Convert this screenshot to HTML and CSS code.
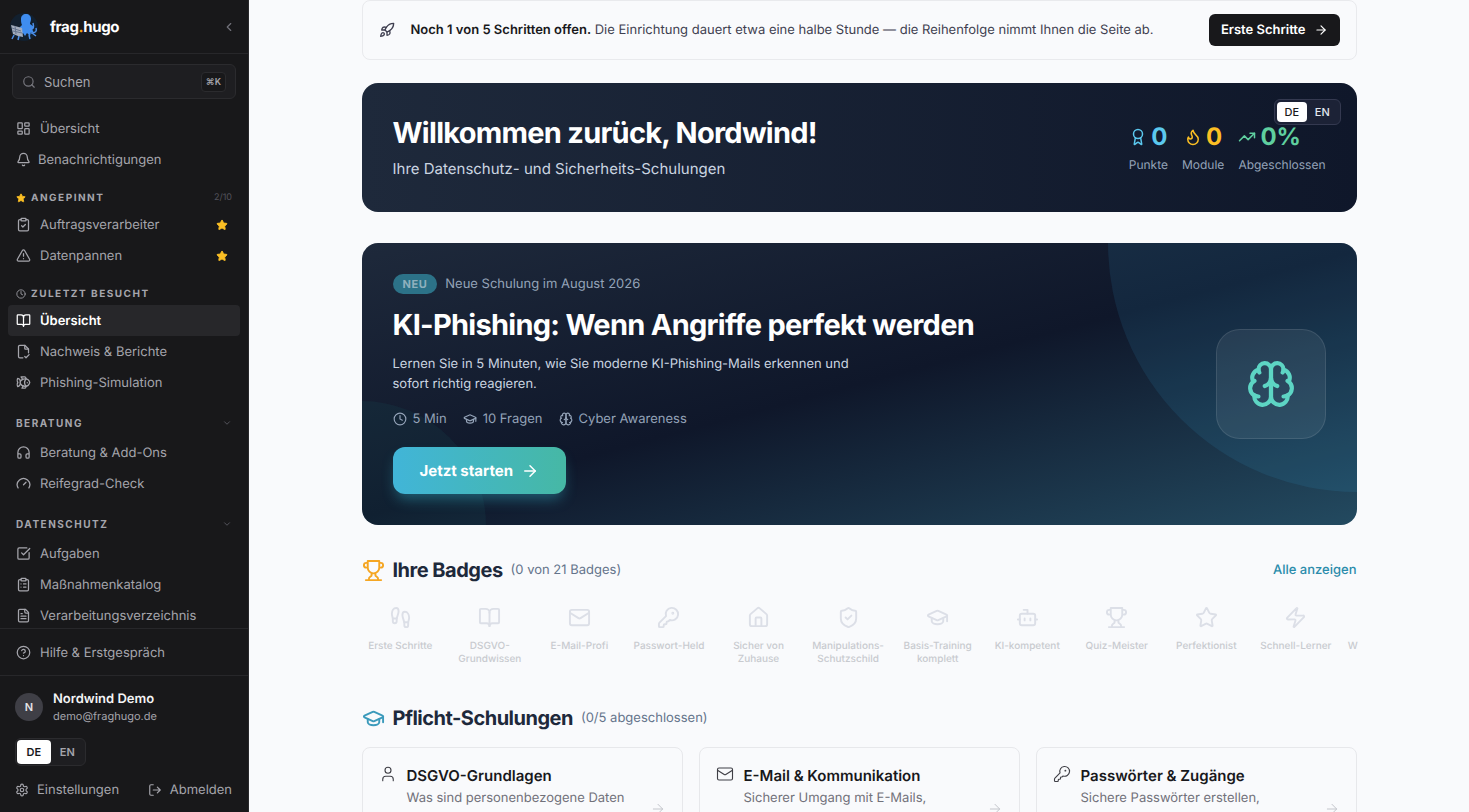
FILE: index.html
```html
<!DOCTYPE html>
<html lang="de">
<head>
    <meta charset="UTF-8">
    <meta name="viewport" content="width=device-width, initial-scale=1.0">
    <title>frag.hugo – Übersicht</title>
    <link rel="stylesheet" href="styles.css">
</head>
<body>
    <!-- Icon sprite -->
    <svg class="sprite" aria-hidden="true">
        <symbol id="chevron-left" viewBox="0 0 24 24"><path d="m15 18-6-6 6-6"/></symbol>
        <symbol id="chevron-down" viewBox="0 0 24 24"><path d="m6 9 6 6 6-6"/></symbol>
        <symbol id="arrow-right" viewBox="0 0 24 24"><path d="M5 12h14"/><path d="m12 5 7 7-7 7"/></symbol>
        <symbol id="search" viewBox="0 0 24 24"><circle cx="11" cy="11" r="8"/><path d="m21 21-4.3-4.3"/></symbol>
        <symbol id="dashboard" viewBox="0 0 24 24"><rect width="7" height="9" x="3" y="3" rx="1"/><rect width="7" height="5" x="14" y="3" rx="1"/><rect width="7" height="9" x="14" y="12" rx="1"/><rect width="7" height="5" x="3" y="16" rx="1"/></symbol>
        <symbol id="bell" viewBox="0 0 24 24"><path d="M10.268 21a2 2 0 0 0 3.464 0"/><path d="M3.262 15.326A1 1 0 0 0 4 17h16a1 1 0 0 0 .74-1.673C19.41 13.956 18 12.499 18 8A6 6 0 0 0 6 8c0 4.499-1.411 5.956-2.738 7.326"/></symbol>
        <symbol id="star" viewBox="0 0 24 24"><path d="M11.525 2.295a.53.53 0 0 1 .95 0l2.31 4.679a2.123 2.123 0 0 0 1.595 1.16l5.166.756a.53.53 0 0 1 .294.904l-3.736 3.638a2.123 2.123 0 0 0-.611 1.878l.882 5.14a.53.53 0 0 1-.771.56l-4.618-2.428a2.122 2.122 0 0 0-1.973 0L6.396 21.01a.53.53 0 0 1-.77-.56l.881-5.139a2.122 2.122 0 0 0-.611-1.879L2.16 9.795a.53.53 0 0 1 .294-.906l5.165-.755a2.122 2.122 0 0 0 1.597-1.16z"/></symbol>
        <symbol id="clipboard-check" viewBox="0 0 24 24"><rect width="8" height="4" x="8" y="2" rx="1"/><path d="M16 4h2a2 2 0 0 1 2 2v14a2 2 0 0 1-2 2H6a2 2 0 0 1-2-2V6a2 2 0 0 1 2-2h2"/><path d="m9 14 2 2 4-4"/></symbol>
        <symbol id="clipboard-list" viewBox="0 0 24 24"><rect width="8" height="4" x="8" y="2" rx="1"/><path d="M16 4h2a2 2 0 0 1 2 2v14a2 2 0 0 1-2 2H6a2 2 0 0 1-2-2V6a2 2 0 0 1 2-2h2"/><path d="M12 11h4M12 16h4M8 11h.01M8 16h.01"/></symbol>
        <symbol id="alert" viewBox="0 0 24 24"><path d="m21.73 18-8-14a2 2 0 0 0-3.48 0l-8 14A2 2 0 0 0 4 21h16a2 2 0 0 0 1.73-3"/><path d="M12 9v4M12 17h.01"/></symbol>
        <symbol id="clock" viewBox="0 0 24 24"><circle cx="12" cy="12" r="10"/><path d="M12 6v6l4 2"/></symbol>
        <symbol id="book-open" viewBox="0 0 24 24"><path d="M12 7v14"/><path d="M3 18a1 1 0 0 1-1-1V4a1 1 0 0 1 1-1h5a4 4 0 0 1 4 4 4 4 0 0 1 4-4h5a1 1 0 0 1 1 1v13a1 1 0 0 1-1 1h-6a3 3 0 0 0-3 3 3 3 0 0 0-3-3z"/></symbol>
        <symbol id="file-check" viewBox="0 0 24 24"><path d="M11 22H6a2 2 0 0 1-2-2V4a2 2 0 0 1 2-2h8l6 6v6"/><path d="M14 2v5a1 1 0 0 0 1 1h5"/><path d="m14 20 2 2 5-5"/></symbol>
        <symbol id="file-text" viewBox="0 0 24 24"><path d="M15 2H6a2 2 0 0 0-2 2v16a2 2 0 0 0 2 2h12a2 2 0 0 0 2-2V7Z"/><path d="M14 2v4a2 2 0 0 0 2 2h4M10 9H8M16 13H8M16 17H8"/></symbol>
        <symbol id="fish" viewBox="0 0 24 24"><path d="M6.5 12c.94-3.46 4.94-6 8.5-6 3.56 0 6.06 2.54 7 6-.94 3.47-3.44 6-7 6s-7.56-2.53-8.5-6Z"/><path d="M18 12v.5M16 17.93a9.77 9.77 0 0 1 0-11.86"/><path d="M7 10.67C7 8 5.58 5.97 2.73 5.5c-1 1.5-1 5 .23 6.5-1.24 1.5-1.24 5-.23 6.5C5.58 18.03 7 16 7 13.33"/><path d="M10.46 7.26C10.2 5.88 9.17 4.24 8 3h5.8a2 2 0 0 1 1.98 1.67l.23 1.4M16.01 17.93l-.23 1.4A2 2 0 0 1 13.8 21H9.5a5.96 5.96 0 0 0 1.49-3.98"/></symbol>
        <symbol id="headphones" viewBox="0 0 24 24"><path d="M3 14h3a2 2 0 0 1 2 2v3a2 2 0 0 1-2 2H5a2 2 0 0 1-2-2v-7a9 9 0 0 1 18 0v7a2 2 0 0 1-2 2h-1a2 2 0 0 1-2-2v-3a2 2 0 0 1 2-2h3"/></symbol>
        <symbol id="gauge" viewBox="0 0 24 24"><path d="m12 14 4-4"/><path d="M3.34 19a10 10 0 1 1 17.32 0"/></symbol>
        <symbol id="square-check" viewBox="0 0 24 24"><path d="M21 10.656V19a2 2 0 0 1-2 2H5a2 2 0 0 1-2-2V5a2 2 0 0 1 2-2h12.344"/><path d="m9 11 3 3L22 4"/></symbol>
        <symbol id="help" viewBox="0 0 24 24"><circle cx="12" cy="12" r="10"/><path d="M9.09 9a3 3 0 0 1 5.83 1c0 2-3 3-3 3M12 17h.01"/></symbol>
        <symbol id="settings" viewBox="0 0 24 24"><path d="M12.22 2h-.44a2 2 0 0 0-2 2v.18a2 2 0 0 1-1 1.73l-.43.25a2 2 0 0 1-2 0l-.15-.08a2 2 0 0 0-2.73.73l-.22.38a2 2 0 0 0 .73 2.73l.15.1a2 2 0 0 1 1 1.72v.51a2 2 0 0 1-1 1.74l-.15.09a2 2 0 0 0-.73 2.73l.22.38a2 2 0 0 0 2.73.73l.15-.08a2 2 0 0 1 2 0l.43.25a2 2 0 0 1 1 1.73V20a2 2 0 0 0 2 2h.44a2 2 0 0 0 2-2v-.18a2 2 0 0 1 1-1.73l.43-.25a2 2 0 0 1 2 0l.15.08a2 2 0 0 0 2.73-.73l.22-.39a2 2 0 0 0-.73-2.73l-.15-.08a2 2 0 0 1-1-1.74v-.5a2 2 0 0 1 1-1.74l.15-.09a2 2 0 0 0 .73-2.73l-.22-.38a2 2 0 0 0-2.73-.73l-.15.08a2 2 0 0 1-2 0l-.43-.25a2 2 0 0 1-1-1.73V4a2 2 0 0 0-2-2z"/><circle cx="12" cy="12" r="3"/></symbol>
        <symbol id="log-out" viewBox="0 0 24 24"><path d="m16 17 5-5-5-5M21 12H9M9 21H5a2 2 0 0 1-2-2V5a2 2 0 0 1 2-2h4"/></symbol>
        <symbol id="rocket" viewBox="0 0 24 24"><path d="M4.5 16.5c-1.5 1.26-2 5-2 5s3.74-.5 5-2c.71-.84.7-2.13-.09-2.91a2.18 2.18 0 0 0-2.91-.09z"/><path d="m12 15-3-3a22 22 0 0 1 2-3.95A12.88 12.88 0 0 1 22 2c0 2.72-.78 7.5-6 11a22.35 22.35 0 0 1-4 2z"/><path d="M9 12H4s.55-3.03 2-4c1.62-1.08 5 0 5 0M12 15v5s3.03-.55 4-2c1.08-1.62 0-5 0-5"/></symbol>
        <symbol id="award" viewBox="0 0 24 24"><path d="m15.477 12.89 1.515 8.526a.5.5 0 0 1-.81.47l-3.58-2.687a1 1 0 0 0-1.197 0l-3.586 2.686a.5.5 0 0 1-.81-.469l1.514-8.526"/><circle cx="12" cy="8" r="6"/></symbol>
        <symbol id="flame" viewBox="0 0 24 24"><path d="M8.5 14.5A2.5 2.5 0 0 0 11 12c0-1.38-.5-2-1-3-1.072-2.143-.224-4.054 2-6 .5 2.5 2 4.9 4 6.5 2 1.6 3 3.5 3 5.5a7 7 0 1 1-14 0c0-1.153.433-2.294 1-3a2.5 2.5 0 0 0 2.5 2.5z"/></symbol>
        <symbol id="trending-up" viewBox="0 0 24 24"><path d="m22 7-8.5 8.5-5-5L2 17"/><path d="M16 7h6v6"/></symbol>
        <symbol id="graduation-cap" viewBox="0 0 24 24"><path d="M21.42 10.922a1 1 0 0 0-.019-1.838L12.83 5.18a2 2 0 0 0-1.66 0L2.6 9.08a1 1 0 0 0 0 1.832l8.57 3.908a2 2 0 0 0 1.66 0z"/><path d="M22 10v6"/><path d="M6 12.5V16a6 3 0 0 0 12 0v-3.5"/></symbol>
        <symbol id="brain" viewBox="0 0 24 24"><path d="M12 5a3 3 0 1 0-5.997.125 4 4 0 0 0-2.526 5.77 4 4 0 0 0 .556 6.588A4 4 0 1 0 12 18Z"/><path d="M12 5a3 3 0 1 1 5.997.125 4 4 0 0 1 2.526 5.77 4 4 0 0 1-.556 6.588A4 4 0 1 1 12 18Z"/><path d="M15 13a4.5 4.5 0 0 1-3-4 4.5 4.5 0 0 1-3 4"/><path d="M17.599 6.5a3 3 0 0 0 .399-1.375M6.003 5.125A3 3 0 0 0 6.401 6.5M3.477 10.896a4 4 0 0 1 .585-.396M19.938 10.5a4 4 0 0 1 .585.396M6 18a4 4 0 0 1-1.967-.516M19.967 17.484A4 4 0 0 1 18 18"/></symbol>
        <symbol id="trophy" viewBox="0 0 24 24"><path d="M6 9H4.5a2.5 2.5 0 0 1 0-5H6M18 9h1.5a2.5 2.5 0 0 0 0-5H18M4 22h16M10 14.66V17c0 .55-.47.98-.97 1.21C7.85 18.75 7 20.24 7 22M14 14.66V17c0 .55.47.98.97 1.21C16.15 18.75 17 20.24 17 22M18 2H6v7a6 6 0 0 0 12 0V2Z"/></symbol>
        <symbol id="footprints" viewBox="0 0 24 24"><path d="M4 16v-2.38C4 11.5 2.97 10.5 3 8c.03-2.72 1.49-6 4.5-6C9.37 2 10 3.8 10 5.5c0 3.11-2 5.66-2 8.68V16a2 2 0 1 1-4 0Z"/><path d="M20 20v-2.38c0-2.12 1.03-3.12 1-5.62-.03-2.72-1.49-6-4.5-6C14.63 6 14 7.8 14 9.5c0 3.11 2 5.66 2 8.68V20a2 2 0 1 0 4 0Z"/><path d="M16 17h4M4 13h4"/></symbol>
        <symbol id="mail" viewBox="0 0 24 24"><rect width="20" height="16" x="2" y="4" rx="2"/><path d="m22 7-8.97 5.7a1.94 1.94 0 0 1-2.06 0L2 7"/></symbol>
        <symbol id="key" viewBox="0 0 24 24"><path d="M2.586 17.414A2 2 0 0 0 2 18.828V21a1 1 0 0 0 1 1h3a1 1 0 0 0 1-1v-1a1 1 0 0 1 1-1h1a1 1 0 0 0 1-1v-1a1 1 0 0 1 1-1h.172a2 2 0 0 0 1.414-.586l.814-.814a6.5 6.5 0 1 0-4-4z"/><circle cx="16.5" cy="7.5" r=".5" fill="currentColor"/></symbol>
        <symbol id="house" viewBox="0 0 24 24"><path d="M15 21v-8a1 1 0 0 0-1-1h-4a1 1 0 0 0-1 1v8"/><path d="M3 10a2 2 0 0 1 .709-1.528l7-5.999a2 2 0 0 1 2.582 0l7 5.999A2 2 0 0 1 21 10v9a2 2 0 0 1-2 2H5a2 2 0 0 1-2-2z"/></symbol>
        <symbol id="shield-check" viewBox="0 0 24 24"><path d="M20 13c0 5-3.5 7.5-7.66 8.95a1 1 0 0 1-.67-.01C7.5 20.5 4 18 4 13V6a1 1 0 0 1 1-1c2 0 4.5-1.2 6.24-2.72a1.17 1.17 0 0 1 1.52 0C14.51 3.81 17 5 19 5a1 1 0 0 1 1 1z"/><path d="m9 12 2 2 4-4"/></symbol>
        <symbol id="bot" viewBox="0 0 24 24"><path d="M12 8V4H8"/><rect width="16" height="12" x="4" y="8" rx="2"/><path d="M2 14h2M20 14h2M15 13v2M9 13v2"/></symbol>
        <symbol id="zap" viewBox="0 0 24 24"><path d="M4 14a1 1 0 0 1-.78-1.63l9.9-10.2a.5.5 0 0 1 .86.46l-1.92 6.02A1 1 0 0 0 13 10h7a1 1 0 0 1 .78 1.63l-9.9 10.2a.5.5 0 0 1-.86-.46l1.92-6.02A1 1 0 0 0 11 14z"/></symbol>
        <symbol id="user" viewBox="0 0 24 24"><path d="M19 21v-2a4 4 0 0 0-4-4H9a4 4 0 0 0-4 4v2"/><circle cx="12" cy="7" r="4"/></symbol>
    </svg>

    <div class="app">
        <aside class="sidebar">
            <header class="brand">
                <svg class="logo" viewBox="0 0 32 32" aria-hidden="true">
                    <circle cx="16" cy="16" r="14" fill="#12202f"/>
                    <path fill="#3f8df0" d="M13 8c0-3 2-5 5-5s5 2 5 5c0 2-1 3.5-1 5l4 3-2 2 2 4-3-1-1 4-3-3-2 3-2-3-3 1 1-4-2-2 3-3c-1-2-1-4-1-6z"/>
                    <path fill="none" stroke="#4c8fe8" stroke-width="1.5" d="M21 18c5 1 5-2 4-6M23 22c5 0 6-2 5-5M6 24l-2 4M11 25l-1 4M21 24l1 4M24 22l4 3"/>
                    <path fill="#a3adbd" d="m3 14 4 1 7 2 1 9-5-1-5-2z"/>
                    <path fill="none" stroke="#65758f" d="m4 17 9 3M5 20l9 2M7 15l1 8"/>
                </svg>
                <span class="brand-name">frag<span class="dot">.</span>hugo</span>
                <button class="collapse" aria-label="Seitenleiste einklappen"><svg class="icon"><use href="#chevron-left"/></svg></button>
            </header>

            <div class="nav-scroll">
                <button class="search">
                    <svg class="icon"><use href="#search"/></svg>
                    <span>Suchen</span>
                    <kbd>⌘K</kbd>
                </button>

                <nav>
                    <div class="nav-group">
                        <a class="nav-item" href="#"><svg class="icon"><use href="#dashboard"/></svg>Übersicht</a>
                        <a class="nav-item bell" href="#"><svg class="icon"><use href="#bell"/></svg>Benachrichtigungen</a>
                    </div>

                    <div class="nav-title"><svg class="icon gold"><use href="#star"/></svg>Angepinnt<span class="count">2/10</span></div>
                    <div class="nav-group">
                        <a class="nav-item" href="#"><svg class="icon"><use href="#clipboard-check"/></svg>Auftragsverarbeiter<svg class="icon gold pin"><use href="#star"/></svg></a>
                        <a class="nav-item" href="#"><svg class="icon"><use href="#alert"/></svg>Datenpannen<svg class="icon gold pin"><use href="#star"/></svg></a>
                    </div>

                    <div class="nav-title"><svg class="icon"><use href="#clock"/></svg>Zuletzt besucht</div>
                    <div class="nav-group">
                        <a class="nav-item active" href="#"><svg class="icon"><use href="#book-open"/></svg>Übersicht</a>
                        <a class="nav-item" href="#"><svg class="icon"><use href="#file-check"/></svg>Nachweis &amp; Berichte</a>
                        <a class="nav-item" href="#"><svg class="icon"><use href="#fish"/></svg>Phishing-Simulation</a>
                    </div>

                    <button class="nav-title section">Beratung<svg class="icon"><use href="#chevron-down"/></svg></button>
                    <div class="nav-group">
                        <a class="nav-item" href="#"><svg class="icon"><use href="#headphones"/></svg>Beratung &amp; Add-Ons</a>
                        <a class="nav-item" href="#"><svg class="icon"><use href="#gauge"/></svg>Reifegrad-Check</a>
                    </div>

                    <button class="nav-title section">Datenschutz<svg class="icon"><use href="#chevron-down"/></svg></button>
                    <div class="nav-group">
                        <a class="nav-item" href="#"><svg class="icon"><use href="#square-check"/></svg>Aufgaben</a>
                        <a class="nav-item" href="#"><svg class="icon"><use href="#clipboard-list"/></svg>Maßnahmenkatalog</a>
                        <a class="nav-item" href="#"><svg class="icon"><use href="#file-text"/></svg>Verarbeitungsverzeichnis</a>
                    </div>
                </nav>
            </div>

            <div class="help">
                <a class="nav-item" href="#"><svg class="icon"><use href="#help"/></svg>Hilfe &amp; Erstgespräch</a>
            </div>

            <footer class="account">
                <div class="user">
                    <span class="avatar">N</span>
                    <div>
                        <div class="user-name">Nordwind Demo</div>
                        <div class="user-mail">demo@fraghugo.de</div>
                    </div>
                </div>
                <div class="lang">
                    <button class="on">DE</button>
                    <button>EN</button>
                </div>
                <div class="account-links">
                    <a href="#"><svg class="icon"><use href="#settings"/></svg>Einstellungen</a>
                    <a href="#"><svg class="icon"><use href="#log-out"/></svg>Abmelden</a>
                </div>
            </footer>
        </aside>

        <main class="main">
            <div class="content">
                <section class="setup">
                    <svg class="icon"><use href="#rocket"/></svg>
                    <p><strong>Noch 1 von 5 Schritten offen.</strong> Die Einrichtung dauert etwa eine halbe Stunde — die Reihenfolge nimmt Ihnen die Seite ab.</p>
                    <a class="setup-btn" href="#">Erste Schritte<svg class="icon"><use href="#arrow-right"/></svg></a>
                </section>

                <section class="welcome">
                    <div class="welcome-text">
                        <h1>Willkommen zurück, Nordwind!</h1>
                        <p>Ihre Datenschutz- und Sicherheits-Schulungen</p>
                    </div>
                    <div class="stats">
                        <div class="stat cyan">
                            <div class="stat-value"><svg class="icon"><use href="#award"/></svg>0</div>
                            <div class="stat-label">Punkte</div>
                        </div>
                        <div class="stat yellow">
                            <div class="stat-value"><svg class="icon"><use href="#flame"/></svg>0</div>
                            <div class="stat-label">Module</div>
                        </div>
                        <div class="stat green">
                            <div class="stat-value"><svg class="icon"><use href="#trending-up"/></svg>0%</div>
                            <div class="stat-label">Abgeschlossen</div>
                        </div>
                    </div>
                    <div class="lang lang-float">
                        <button class="on">DE</button>
                        <button>EN</button>
                    </div>
                </section>

                <section class="hero">
                    <div class="hero-text">
                        <div class="hero-tag"><span class="pill">NEU</span>Neue Schulung im August 2026</div>
                        <h2>KI-Phishing: Wenn Angriffe perfekt werden</h2>
                        <p>Lernen Sie in 5 Minuten, wie Sie moderne KI-Phishing-Mails erkennen und sofort richtig reagieren.</p>
                        <div class="meta">
                            <span><svg class="icon"><use href="#clock"/></svg>5 Min</span>
                            <span><svg class="icon"><use href="#graduation-cap"/></svg>10 Fragen</span>
                            <span><svg class="icon"><use href="#brain"/></svg>Cyber Awareness</span>
                        </div>
                        <a class="start-btn" href="#">Jetzt starten<svg class="icon"><use href="#arrow-right"/></svg></a>
                    </div>
                    <div class="hero-icon"><svg class="icon"><use href="#brain"/></svg></div>
                </section>

                <section>
                    <div class="section-head">
                        <svg class="icon amber"><use href="#trophy"/></svg>
                        <h3>Ihre Badges</h3>
                        <span class="note">(0 von 21 Badges)</span>
                        <a href="#">Alle anzeigen</a>
                    </div>
                    <div class="badges">
                        <div class="badge"><svg class="icon"><use href="#footprints"/></svg>Erste Schritte</div>
                        <div class="badge"><svg class="icon"><use href="#book-open"/></svg>DSGVO-Grundwissen</div>
                        <div class="badge"><svg class="icon"><use href="#mail"/></svg>E-Mail-Profi</div>
                        <div class="badge"><svg class="icon"><use href="#key"/></svg>Passwort-Held</div>
                        <div class="badge"><svg class="icon"><use href="#house"/></svg>Sicher von Zuhause</div>
                        <div class="badge"><svg class="icon"><use href="#shield-check"/></svg>Manipulations-Schutzschild</div>
                        <div class="badge"><svg class="icon"><use href="#graduation-cap"/></svg>Basis-Training komplett</div>
                        <div class="badge"><svg class="icon"><use href="#bot"/></svg>KI-kompetent</div>
                        <div class="badge"><svg class="icon"><use href="#trophy"/></svg>Quiz-Meister</div>
                        <div class="badge"><svg class="icon"><use href="#star"/></svg>Perfektionist</div>
                        <div class="badge"><svg class="icon"><use href="#zap"/></svg>Schnell-Lerner</div>
                        <div class="badge last">W</div>
                    </div>
                </section>

                <section>
                    <div class="section-head">
                        <svg class="icon blue"><use href="#graduation-cap"/></svg>
                        <h3>Pflicht-Schulungen</h3>
                        <span class="note">(0/5 abgeschlossen)</span>
                    </div>
                    <div class="courses">
                        <a class="course" href="#">
                            <svg class="icon"><use href="#user"/></svg>
                            <div class="course-text">
                                <h4>DSGVO-Grundlagen</h4>
                                <p>Was sind personenbezogene Daten</p>
                            </div>
                            <svg class="icon go"><use href="#arrow-right"/></svg>
                        </a>
                        <a class="course" href="#">
                            <svg class="icon"><use href="#mail"/></svg>
                            <div class="course-text">
                                <h4>E-Mail &amp; Kommunikation</h4>
                                <p>Sicherer Umgang mit E-Mails,</p>
                            </div>
                            <svg class="icon go"><use href="#arrow-right"/></svg>
                        </a>
                        <a class="course" href="#">
                            <svg class="icon"><use href="#key"/></svg>
                            <div class="course-text">
                                <h4>Passwörter &amp; Zugänge</h4>
                                <p>Sichere Passwörter erstellen,</p>
                            </div>
                            <svg class="icon go"><use href="#arrow-right"/></svg>
                        </a>
                    </div>
                </section>
            </div>
        </main>
    </div>
</body>
</html>
```
FILE: styles.css
```css
* {
    box-sizing: border-box;
}

body {
    margin: 0;
    font-family: Inter, sans-serif;
    font-size: 13px;
    line-height: 20px;
    text-rendering: geometricPrecision;
    color: #1e293b;
    background: #f9fafc;
}

h1, h2, h3, h4, p {
    margin: 0;
}

a {
    color: inherit;
    text-decoration: none;
}

button {
    font: inherit;
    color: inherit;
    border: none;
    background: none;
    padding: 0;
    cursor: pointer;
}

.sprite {
    display: none;
}

.icon {
    width: 16px;
    height: 16px;
    flex-shrink: 0;
    fill: none;
    stroke: currentColor;
    stroke-width: 2;
    stroke-linecap: round;
    stroke-linejoin: round;
}

.app {
    display: flex;
    height: 100vh;
    overflow: hidden;
}

/* Sidebar */
.sidebar {
    width: 249px;
    flex-shrink: 0;
    display: flex;
    flex-direction: column;
    background: #18181a;
    border-right: 1px solid #29292c;
    color: #a5a5ac;
}

.brand {
    display: flex;
    align-items: center;
    gap: 10px;
    height: 54px;
    flex-shrink: 0;
    padding: 0 12px 0 8px;
    border-bottom: 1px solid #27272a;
}

.logo {
    width: 32px;
    height: 32px;
}

.brand-name {
    color: #fff;
    font-size: 15px;
    font-weight: 700;
    letter-spacing: -0.025em;
}

.dot {
    color: #f59e0b;
}

.collapse {
    display: flex;
    margin-left: auto;
    color: #71717a;
}

.collapse .icon {
    width: 14px;
    height: 14px;
}

.nav-scroll {
    flex: 1;
    min-height: 0;
    overflow: hidden;
    padding: 10px 8px 0;
}

.search {
    display: flex;
    align-items: center;
    gap: 8px;
    width: calc(100% - 8px);
    height: 35px;
    margin: 0 4px 14px;
    padding: 0 9px;
    border: 1px solid #2b2b2e;
    border-radius: 6px;
    background: #1e1e21;
}

.search .icon {
    width: 14px;
    height: 14px;
    color: #77777e;
}

.search kbd {
    margin-left: auto;
    padding: 0 4px;
    border: 1px solid #2b2b2e;
    border-radius: 4px;
    background: #18181a;
    font-family: Inter, sans-serif;
    font-size: 9px;
    font-weight: 600;
    line-height: 18px;
}

.nav-item {
    display: flex;
    align-items: center;
    gap: 9px;
    height: 31px;
    padding: 0 8px;
    border-radius: 4px;
}

.nav-item .icon {
    width: 15px;
    height: 15px;
}

.nav-item.bell {
    gap: 7px;
}

.nav-item.active {
    color: #fff;
    background: #27272a;
    font-weight: 600;
}

.nav-item .pin {
    width: 12px;
    height: 12px;
    margin: 0 4px 0 auto;
}

.icon.gold {
    color: #fbbf24;
    fill: currentColor;
}

.nav-title {
    display: flex;
    align-items: center;
    gap: 5px;
    width: 100%;
    height: 12px;
    margin: 17px 0 5px;
    padding: 0 8px;
    font-size: 10px;
    font-weight: 700;
    line-height: 12px;
    letter-spacing: 0.15em;
    text-transform: uppercase;
}

.nav-title .icon {
    width: 10px;
    height: 10px;
}

.nav-title .count {
    margin-left: auto;
    color: #52525b;
    font-size: 9px;
    font-weight: 400;
    letter-spacing: 0;
}

.nav-title.section {
    justify-content: space-between;
    margin: 19px 0 8px;
}

.nav-title.section .icon {
    color: #5f5f68;
}

.help {
    padding: 8px 8px 7px;
    border-top: 1px solid #27272a;
}

.account {
    padding: 14px 16px 12px 15px;
    border-top: 1px solid #27272a;
}

.user {
    display: flex;
    align-items: center;
    gap: 10px;
}

.avatar {
    width: 28px;
    height: 28px;
    border-radius: 50%;
    background: #3f3f46;
    color: #e4e4e7;
    font-size: 11px;
    font-weight: 600;
    line-height: 28px;
    text-align: center;
}

.user-name {
    color: #f4f4f5;
    font-weight: 600;
    line-height: 18px;
}

.user-mail {
    font-size: 11px;
    line-height: 16px;
}

/* Language switch */
.lang {
    display: flex;
    width: 71px;
    margin: 14px 0;
    padding: 1px;
    border: 1px solid #2b2b2e;
    border-radius: 6px;
    background: #1e1e21;
    font-size: 11px;
    font-weight: 600;
    line-height: 24px;
}

.lang button {
    flex: 1;
    border-radius: 4px;
}

.lang .on {
    background: #fff;
    color: #18181b;
}

.account-links {
    display: flex;
    justify-content: space-between;
}

.account-links a {
    display: flex;
    align-items: center;
    gap: 8px;
}

.account-links .icon {
    width: 14px;
    height: 14px;
}

/* Main column */
.main {
    flex: 1;
    min-width: 0;
    overflow: hidden;
    padding: 0 24px;
}

.content {
    max-width: 995px;
    margin: 0 auto;
}

.setup {
    display: flex;
    align-items: center;
    gap: 16px;
    min-height: 60px;
    padding: 0 16px;
    border: 1px solid #e9eaed;
    border-radius: 8px;
    color: #3f3f50;
}

.setup p {
    flex: 1;
}

.setup strong {
    color: #18181b;
    font-weight: 600;
}

.setup-btn {
    display: flex;
    align-items: center;
    gap: 8px;
    height: 32px;
    padding: 0 12px;
    border-radius: 6px;
    background: #18181b;
    color: #fff;
    font-weight: 600;
}

.setup-btn .icon {
    width: 14px;
    height: 14px;
}

.welcome {
    position: relative;
    display: flex;
    justify-content: space-between;
    align-items: center;
    min-height: 129px;
    margin: 23px 0 31px;
    padding: 0 31px;
    border-radius: 16px;
    background: linear-gradient(90deg, #1e293b, #0f172a);
}

.welcome h1 {
    color: #fff;
    font-size: 29px;
    font-weight: 700;
    line-height: 36px;
    letter-spacing: -0.025em;
}

.welcome p {
    margin-top: 6px;
    color: #cbd5e1;
    font-size: 15px;
    line-height: 24px;
}

.stats {
    display: flex;
    gap: 14px;
}

.stat-value {
    display: flex;
    align-items: center;
    justify-content: center;
    gap: 4px;
    font-size: 24px;
    font-weight: 700;
    line-height: 32px;
}

.stat-value .icon {
    width: 18px;
    height: 18px;
}

.stat.green .stat-value {
    justify-content: flex-start;
}

.stat-label {
    margin-top: 2px;
    color: #94a3b8;
    font-size: 12px;
}

.stat.cyan .stat-value {
    color: #5bc8ee;
}

.stat.yellow .stat-value {
    color: #fbbf24;
}

.stat.green .stat-value {
    color: #5fcf9f;
}

.lang-float {
    position: absolute;
    top: 16px;
    right: 16px;
    width: 67px;
    margin: 0;
    border-color: #343950;
    background: #1c2236;
    color: #e2e8f0;
    font-weight: 500;
    line-height: 20px;
    padding: 2px;
}

.hero {
    position: relative;
    display: flex;
    justify-content: space-between;
    align-items: center;
    min-height: 282px;
    overflow: hidden;
    padding: 0 31px;
    border-radius: 16px;
    background: linear-gradient(165deg, #1e293b, #0f172a 50%, #234a60);
}

.hero::before {
    content: "";
    position: absolute;
    top: -249px;
    right: -249px;
    width: 498px;
    height: 498px;
    border-radius: 50%;
    background: rgba(56, 189, 248, 0.1);
}

.hero::after {
    content: "";
    position: absolute;
    bottom: -125px;
    left: -125px;
    width: 249px;
    height: 249px;
    border-radius: 50%;
    background: rgba(45, 212, 191, 0.05);
}

.hero-text,
.hero-icon {
    position: relative;
    z-index: 1;
}

.hero-tag {
    display: flex;
    align-items: center;
    gap: 8px;
    color: #94a3b8;
}

.pill {
    padding: 0 10px;
    border-radius: 10px;
    background: #2c7288;
    color: #8fb0bd;
    font-size: 11px;
    font-weight: 700;
    letter-spacing: 0.05em;
}

.hero h2 {
    margin: 13px 0 11px;
    color: #fff;
    font-size: 29px;
    font-weight: 700;
    line-height: 36px;
    letter-spacing: -0.025em;
}

.hero p {
    max-width: 480px;
    color: #cbd5e1;
}

.meta {
    display: flex;
    gap: 16px;
    margin: 15px 0 18px;
    color: #94a3b8;
}

.meta span {
    display: flex;
    align-items: center;
    gap: 6px;
}

.meta .icon {
    width: 14px;
    height: 14px;
}

.start-btn {
    display: inline-flex;
    align-items: center;
    gap: 8px;
    height: 47px;
    padding: 0 27px;
    border-radius: 12px;
    background: linear-gradient(90deg, #41b5d8, #46b8a5);
    box-shadow: 0 8px 14px -3px rgba(56, 189, 216, 0.4);
    color: #fff;
    font-size: 15px;
    font-weight: 700;
}

.start-btn .icon {
    width: 18px;
    height: 18px;
}

.hero-icon {
    display: flex;
    align-items: center;
    justify-content: center;
    width: 110px;
    height: 110px;
    border: 1px solid rgba(255, 255, 255, 0.1);
    border-radius: 24px;
    background: rgba(255, 255, 255, 0.07);
    color: #5dd5c4;
}

.hero-icon .icon {
    width: 50px;
    height: 50px;
}

/* Badges and courses */
.section-head {
    display: flex;
    align-items: center;
    gap: 8px;
    height: 28px;
    margin-top: 31px;
}

.section-head .icon {
    width: 23px;
    height: 23px;
}

.section-head h3 {
    font-size: 20px;
    font-weight: 700;
    letter-spacing: -0.025em;
}

.note {
    color: #64748b;
}

.section-head a {
    margin-left: auto;
    color: #2b8cab;
    font-weight: 500;
}

.amber {
    color: #f5a623;
}

.blue {
    color: #3b9abb;
}

.badges {
    display: flex;
    gap: 12px;
    overflow: hidden;
    margin-right: -6px;
    padding: 22px 0 7px;
}

.badge {
    display: flex;
    flex-direction: column;
    align-items: center;
    gap: 11px;
    width: 7.75%;
    min-height: 60px;
    flex-shrink: 0;
    padding: 0 2px;
    color: #c8cacf;
    font-size: 10px;
    font-weight: 500;
    line-height: 13px;
    text-align: center;
}

.badge .icon {
    width: 23px;
    height: 23px;
    color: #dcdfe7;
}

.badge.last {
    width: 12px;
    padding-top: 34px;
}

.courses {
    display: grid;
    grid-template-columns: repeat(3, 1fr);
    gap: 16px;
    margin-top: 15px;
}

.course {
    display: flex;
    gap: 10px;
    min-height: 122px;
    padding: 16px;
    border: 1px solid #e7e8eb;
    border-radius: 8px;
}

.course > .icon {
    width: 18px;
    height: 18px;
    margin-top: 1px;
    stroke-width: 1.5;
    color: #3f3f46;
}

.course-text {
    flex: 1;
}

.course h4 {
    color: #18181b;
    font-size: 15px;
    font-weight: 600;
    line-height: 24px;
}

.course p {
    color: #71717a;
}

.course > .go {
    align-self: center;
    width: 16px;
    height: 16px;
    color: #c4c6cc;
}
```
